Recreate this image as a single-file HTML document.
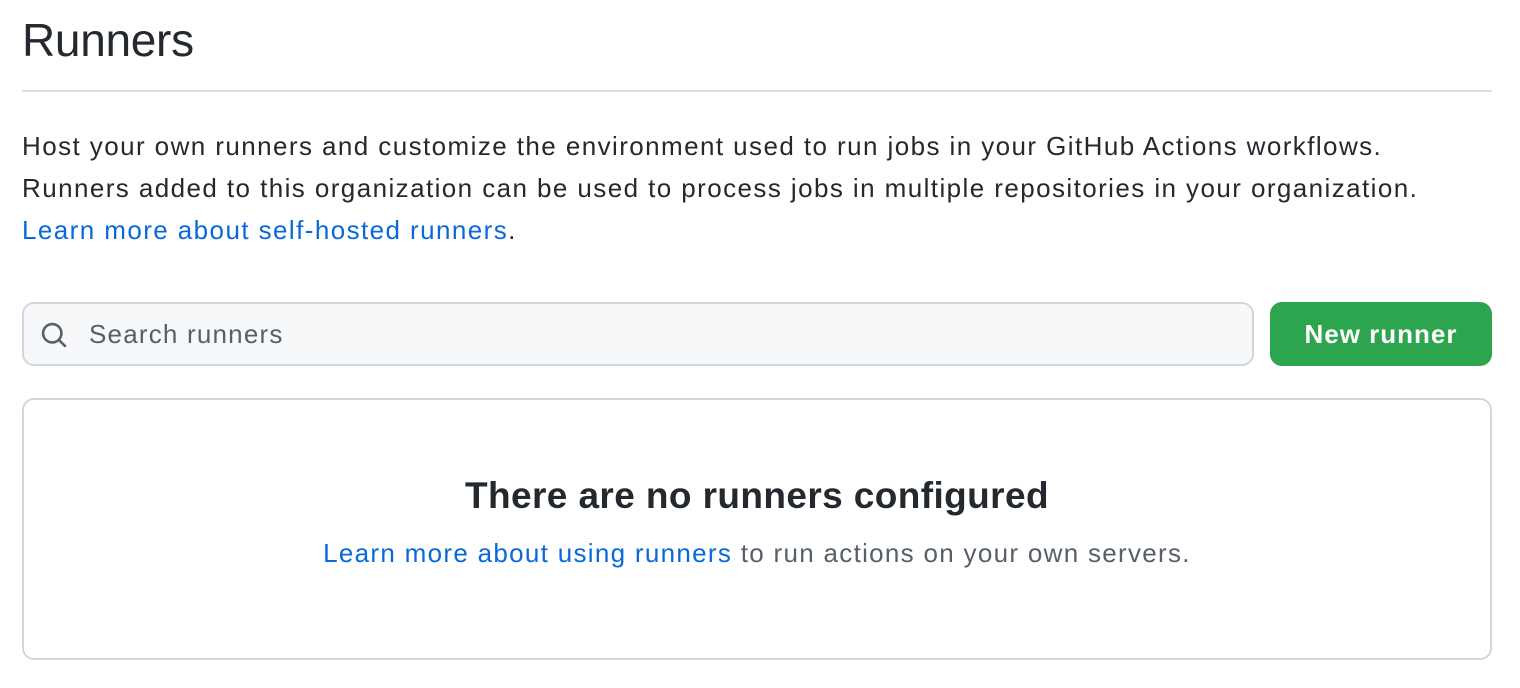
<!DOCTYPE html>
<html><head><style>
body{margin:0;width:1520px;height:688px;background:#fff;font-family:"Liberation Sans",Arial,sans-serif;color:#24292f;position:relative;overflow:hidden}
.a{position:absolute}
h1{position:absolute;left:22px;top:12px;margin:0;font-size:46px;font-weight:400;line-height:56px;letter-spacing:-0.3px}
.hr{left:22px;top:90px;width:1470px;height:2px;background:#d8dee4}
.p{left:22px;top:125px;font-size:26px;line-height:42px;width:1480px;letter-spacing:1.42px}
a{color:#0969da;text-decoration:none}
.s{left:22px;top:302px;width:1232px;height:64px;border:2px solid #d0d7de;border-radius:12px;background:#f6f8fa;box-sizing:border-box}
.s span{position:absolute;left:65px;top:15px;font-size:26px;color:#57606a;letter-spacing:1.2px}
.b{left:1270px;top:302px;width:222px;height:64px;background:#2da44e;border-radius:12px;color:#fff;font-size:26px;font-weight:700;text-align:center;line-height:64px;letter-spacing:1px}
.box{left:22px;top:398px;width:1470px;height:262px;border:2px solid #d0d7de;border-radius:12px;box-sizing:border-box;text-align:center}
.box h2{margin:72px 0 0;font-size:37px;line-height:48px;font-weight:700;letter-spacing:0.4px}
.box div{margin-top:15px;font-size:26px;color:#57606a;line-height:36px;letter-spacing:1.3px}
</style></head><body>
<h1>Runners</h1>
<div class="a hr"></div>
<div class="a p">Host your own runners and customize the environment used to run jobs in your GitHub Actions workflows.<br>Runners added to this organization can be used to process jobs in multiple repositories in your organization.<br><a>Learn more about self-hosted runners</a>.</div>
<div class="a s"><svg class="a" style="left:16px;top:17px" width="28" height="28" viewBox="0 0 16 16"><path fill="#57606a" d="M10.68 11.74a6 6 0 0 1-7.92-8.98 6 6 0 0 1 8.98 7.920l3.04 3.04a.75.75 0 0 1-1.06 1.06l-3.04-3.04ZM11.5 7a4.5 4.5 0 1 0-9 0 4.5 4.5 0 0 0 9 0Z"/></svg><span>Search runners</span></div>
<div class="a b">New runner</div>
<div class="a box"><h2>There are no runners configured</h2><div><a>Learn more about using runners</a> to run actions on your own servers.</div></div>
</body></html>
